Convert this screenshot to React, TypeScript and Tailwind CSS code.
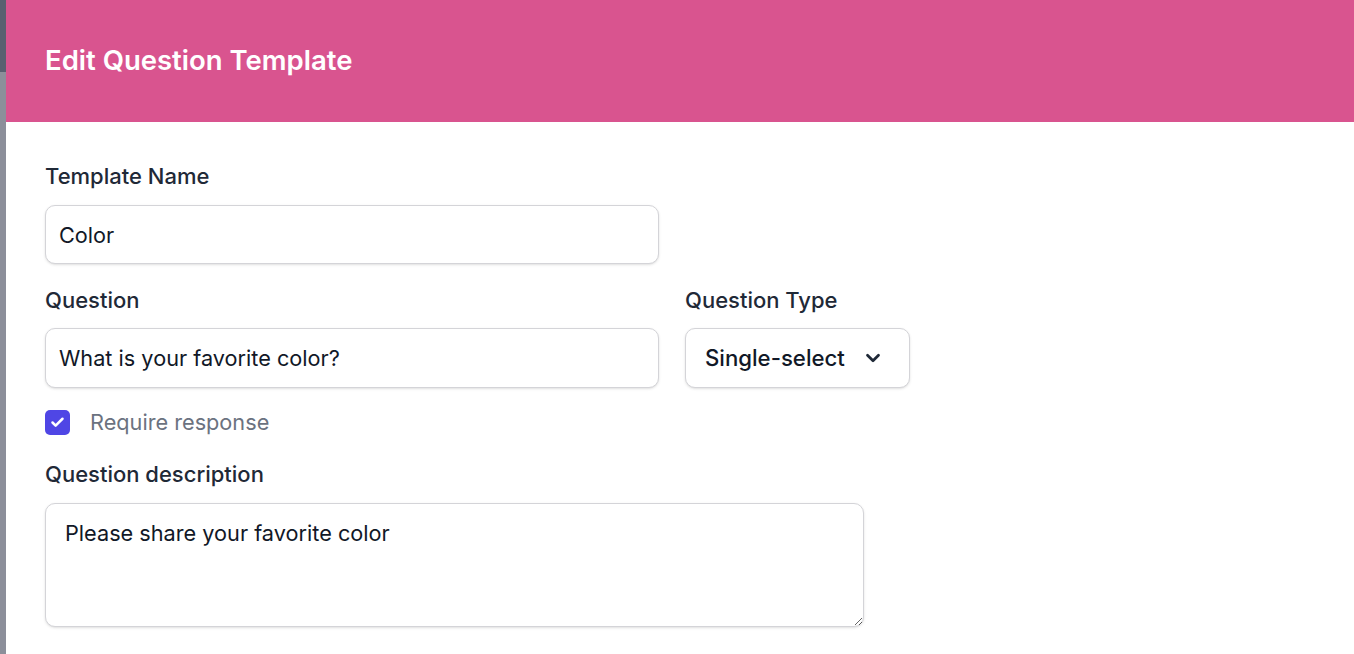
import { ChevronDown, Check } from 'lucide-react'

const font = { fontFamily: 'Inter, "Noto Sans", "Liberation Sans", sans-serif' }

function Label({ children }: { children: React.ReactNode }) {
  return (
    <label className="block text-[22px] leading-[28px] font-medium text-[#1f2937]">
      {children}
    </label>
  )
}

export default function App() {
  return (
    <div className="flex h-screen w-full overflow-hidden bg-white" style={font}>
      {/* backdrop strip behind the modal */}
      <div className="flex w-[6px] shrink-0 flex-col">
        <div className="h-[72px] bg-[#596070]" />
        <div className="flex-1 bg-[#8c8f9a]" />
      </div>

      <div className="flex-1">
        {/* header */}
        <div className="flex h-[122px] items-center bg-[#d9548f] pl-[39px]">
          <h2 className="text-[27.5px] font-semibold text-white">Edit Question Template</h2>
        </div>

        {/* form */}
        <div className="px-[39px] pt-[40px]">
          <Label>Template Name</Label>
          <input
            defaultValue="Color"
            className="mt-[15px] block h-[59px] w-[614px] rounded-[10px] border border-[#d4d4d8] bg-white px-[13px] text-[21.7px] text-[#111827] shadow-sm outline-none"
          />

          <div className="mt-[22px] flex gap-[26px]">
            <div>
              <Label>Question</Label>
              <input
                defaultValue="What is your favorite color?"
                className="mt-[14px] block h-[60px] w-[614px] rounded-[10px] border border-[#d4d4d8] bg-white px-[13px] text-[21.7px] text-[#111827] shadow-sm outline-none"
              />
            </div>
            <div>
              <Label>Question Type</Label>
              <div className="mt-[14px] flex h-[60px] w-[225px] items-center justify-between rounded-[10px] border border-[#d4d4d8] bg-white pl-[19px] pr-[25px] shadow-sm">
                <span className="text-[22.2px] font-medium text-[#111827]">Single-select</span>
                <ChevronDown size={22} strokeWidth={3} className="text-[#1f2937]" />
              </div>
            </div>
          </div>

          <div className="mt-[22px] flex h-[25px] items-center gap-[20px]">
            <div className="flex h-[25px] w-[25px] items-center justify-center rounded-[5px] bg-[#4f46e5]">
              <Check size={15} strokeWidth={4} className="text-white" />
            </div>
            <span className="text-[21.7px] leading-[25px] text-[#6b7280]">Require response</span>
          </div>

          <div className="mt-[25px]">
            <Label>Question description</Label>
            <textarea
              defaultValue="Please share your favorite color"
              className="mt-[15px] block h-[124px] w-[819px] rounded-[10px] border border-[#d4d4d8] bg-white px-[19px] pt-[14px] text-[21.7px] leading-[30px] text-[#111827] shadow-sm outline-none"
            />
          </div>

          <div className="mt-[22px]">
            <Label>Single-select options</Label>
          </div>
        </div>
      </div>
    </div>
  )
}
